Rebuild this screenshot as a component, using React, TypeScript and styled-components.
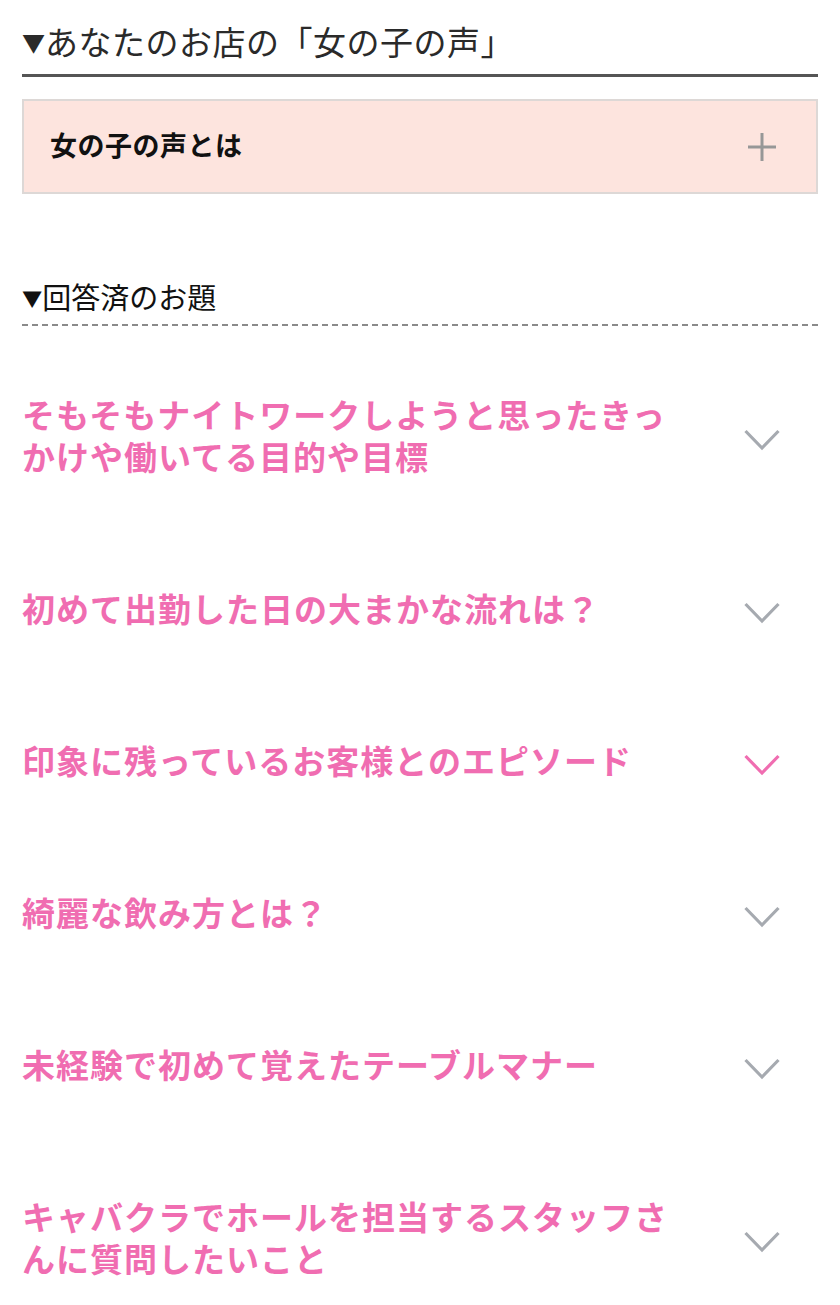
import React from 'react';
import styled, { createGlobalStyle } from 'styled-components';

const GlobalStyle = createGlobalStyle`
  html, body {
    margin: 0;
    padding: 0;
    background: #fff;
  }
  body {
    font-family: "Noto Sans CJK JP", "Noto Sans", sans-serif;
  }
`;

const Page = styled.div`
  padding: 0 22px;
`;

const Title = styled.h1`
  margin: 0;
  padding: 19px 0 10px;
  font-size: 33px;
  line-height: 44px;
  font-weight: 400;
  letter-spacing: 0.5px;
  color: #2a2a2a;
  border-bottom: 3px solid #555;
`;

const Mark = styled.span`
  font-size: 0.7em;
  vertical-align: 0.12em;
  letter-spacing: 0;
`;

const AboutBox = styled.div`
  margin-top: 22px;
  height: 95px;
  box-sizing: border-box;
  display: flex;
  align-items: center;
  justify-content: space-between;
  padding: 0 38px 0 26px;
  background: #fde4de;
  border: 2px solid #ddd8d6;
`;

const AboutLabel = styled.span`
  font-size: 27px;
  font-weight: 700;
  color: #111;
  letter-spacing: 0.5px;
  margin-top: -4px;
`;

const SubTitle = styled.h2`
  margin: 82px 0 0;
  padding-bottom: 6px;
  font-size: 29px;
  line-height: 40px;
  font-weight: 400;
  color: #111;
  border-bottom: 2px dashed #8a8a8a;
`;

const List = styled.ul`
  list-style: none;
  margin: 12px 0 0;
  padding: 0;
`;

const Item = styled.li`
  display: flex;
  align-items: center;
  justify-content: space-between;
  padding: 55px 0;
`;

const Question = styled.span`
  max-width: 675px;
  font-size: 33px;
  line-height: 42px;
  font-weight: 700;
  letter-spacing: 1px;
  color: #f06db1;
`;

const IconBox = styled.span`
  display: flex;
  width: 36px;
  margin: 10px 38px 0 0;
  flex-shrink: 0;
`;

const Plus = () => (
  <svg width="32" height="32" viewBox="0 0 32 32">
    <path d="M16 2v28M2 16h28" stroke="#979797" strokeWidth="3" fill="none" />
  </svg>
);

const Chevron = ({ color }: { color: string }) => (
  <svg width="36" height="22" viewBox="0 0 36 22">
    <path d="M1.5 2L18 19L34.5 2" stroke={color} strokeWidth="3.2" fill="none" />
  </svg>
);

const questions = [
  { text: 'そもそもナイトワークしようと思ったきっかけや働いてる目的や目標', active: false },
  { text: '初めて出勤した日の大まかな流れは？', active: false },
  { text: '印象に残っているお客様とのエピソード', active: true },
  { text: '綺麗な飲み方とは？', active: false },
  { text: '未経験で初めて覚えたテーブルマナー', active: false },
  { text: 'キャバクラでホールを担当するスタッフさんに質問したいこと', active: false },
];

const App: React.FC = () => {
  return (
    <Page>
      <GlobalStyle />
      <Title>
        <Mark>▼</Mark>あなたのお店の「女の子の声」
      </Title>

      <AboutBox>
        <AboutLabel>女の子の声とは</AboutLabel>
        <Plus />
      </AboutBox>

      <SubTitle>
        <Mark>▼</Mark>回答済のお題
      </SubTitle>

      <List>
        {questions.map((q) => (
          <Item key={q.text}>
            <Question>{q.text}</Question>
            <IconBox>
              <Chevron color={q.active ? '#f06db1' : '#a6aab0'} />
            </IconBox>
          </Item>
        ))}
      </List>
    </Page>
  );
};

export default App;
